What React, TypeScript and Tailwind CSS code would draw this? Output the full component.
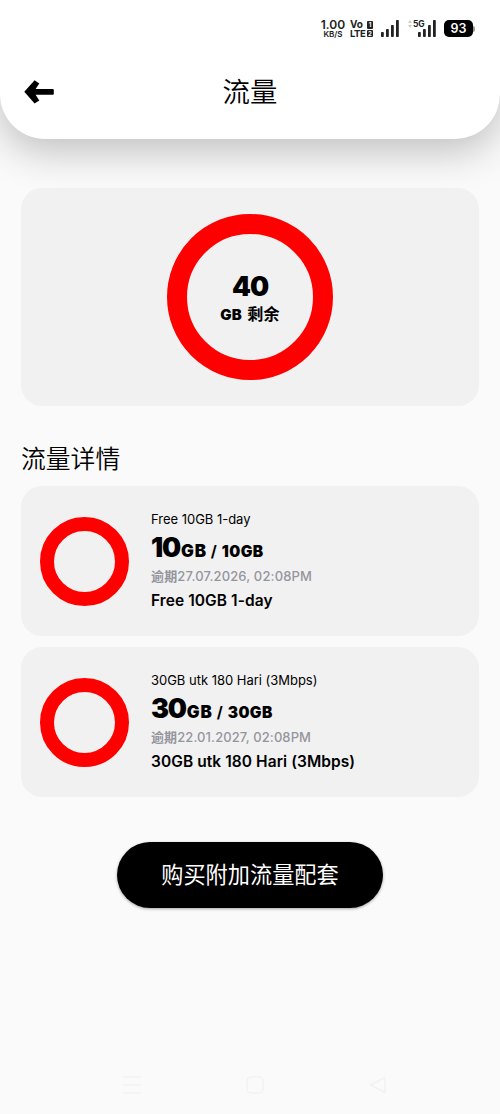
import { clsx } from "clsx";

interface Plan {
  name: string;
  amount: string;
  total: string;
  expiry: string;
  expiryClassName: string;
}

const PLANS: Plan[] = [
  {
    name: "Free 10GB 1-day",
    amount: "10",
    total: "10GB",
    expiry: "27.07.2026, 02:08PM",
    expiryClassName: "tracking-[0.15px]",
  },
  {
    name: "30GB utk 180 Hari (3Mbps)",
    amount: "30",
    total: "30GB",
    expiry: "22.01.2027, 02:08PM",
    expiryClassName: "tracking-[0.1px]",
  },
];

const SignalBars = () => (
  <svg width="18" height="17" viewBox="0 0 18 17" fill="#222" aria-hidden="true">
    <rect x="0" y="12" width="2.8" height="5" rx="0.8" />
    <rect x="5" y="9" width="2.8" height="8" rx="0.8" />
    <rect x="10" y="5" width="2.8" height="12" rx="0.8" />
    <rect x="15" y="0" width="2.8" height="17" rx="0.8" />
  </svg>
);

const StatusBar = () => (
  <div className="flex h-[58px] items-start pl-[320px] pt-5 font-semibold text-[#222]">
    <div className="flex w-[26px] flex-col items-center whitespace-nowrap">
      <span className="text-[12px] leading-[10px]">1.00</span>
      <span className="mt-[1px] text-[8px] leading-[6px]">KB/S</span>
    </div>
    <div className="ml-1 w-[23px] whitespace-nowrap font-bold">
      <div className="flex h-[9px] items-center justify-between">
        <span className="text-[10px] leading-[9px]">Vo</span>
        <span className="flex h-[8px] w-[6px] items-center justify-center rounded-[1px] bg-[#222] text-[6px] text-white">
          1
        </span>
      </div>
      <div className="flex h-[9px] items-center justify-between">
        <span className="text-[9.5px] leading-[9px] tracking-[-0.4px]">LTE</span>
        <span className="flex h-[7px] w-[6px] items-center justify-center rounded-[1px] bg-[#222] text-[6px] text-white">
          2
        </span>
      </div>
    </div>
    <div className="ml-[7.5px]">
      <SignalBars />
    </div>
    <div className="relative ml-[19.5px]">
      <SignalBars />
      <span className="absolute -left-[5px] -top-px bg-white text-[8.5px] font-bold leading-[10px] tracking-[-0.2px]">
        5G
      </span>
      <svg
        className="absolute -left-[10px] top-0"
        width="4"
        height="8"
        viewBox="0 0 4 8"
        fill="#ccc"
        aria-hidden="true"
      >
        <path d="M2 0l2 3H0zM2 8l2-3H0z" />
      </svg>
    </div>
    <div className="ml-2 flex items-center">
      <span className="flex h-[17px] w-[29px] items-center justify-center rounded-[5px] bg-black pt-px text-[12.5px] font-semibold leading-none text-white">
        93
      </span>
      <span className="h-[6px] w-[1.5px] rounded-r bg-[#999]" />
    </div>
  </div>
);

const Header = () => (
  <header className="relative h-[139px] rounded-b-[45px] bg-white shadow-[0_12px_40px_rgba(0,0,0,0.24)]">
    <StatusBar />
    <div className="grid h-[68px] grid-cols-[1fr_auto_1fr] items-center">
      <button type="button" aria-label="返回" className="ml-6 w-[30px]">
        <svg width="30" height="24" viewBox="0 0 30 24" className="block">
          <path
            d="M0.3 11.8L10.6 0.3L15.3 3.4L11.6 9H28.8Q29.8 9 29.8 10V13.7Q29.8 14.7 28.8 14.7H11.6L15.3 20.4L10.6 23.4Z"
            fill="#000"
          />
        </svg>
      </button>
      <h1 className="pt-px text-[27.4px] font-[350] leading-none">流量</h1>
    </div>
  </header>
);

const PlanCard = ({ plan }: { plan: Plan }) => (
  <li className="flex h-[150px] items-center rounded-[21px] bg-[#f1f1f1] pl-[19px]">
    <div className="size-[89px] shrink-0 rounded-full border-[14px] border-[#ff0000]" />
    <div className="ml-[22px] whitespace-nowrap">
      <p className="h-5 text-[13px] leading-5 tracking-[-0.02px]">{plan.name}</p>
      <p className="flex h-9 items-baseline font-black leading-[38px]">
        <span className="text-[27px] tracking-[-1.2px]">{plan.amount}</span>
        <span className="ml-px text-[17px] tracking-[0.8px]">GB</span>
        <span className="ml-1 text-[15.5px] font-bold">/</span>
        <span className="ml-[5px] text-[15.5px] tracking-[0.4px]">{plan.total}</span>
      </p>
      <p
        className={clsx(
          "h-[22px] text-[13px] font-medium leading-[22px] text-[#95959d]",
          plan.expiryClassName
        )}
      >
        <span className="font-bold">逾期</span>
        {plan.expiry}
      </p>
      <p className="h-[26px] text-[15.5px] font-semibold leading-[27px] tracking-[0.07px]">
        {plan.name}
      </p>
    </div>
  </li>
);

const NavigationBar = () => (
  <nav className="mt-auto flex h-[58px] items-center justify-between pl-[123px] pr-[113px]">
    <svg width="18" height="18" viewBox="0 0 18 18" stroke="#f2f2f2" strokeWidth="1.5">
      <path d="M0 1H18M0 9H18M0 17H18" />
    </svg>
    <svg width="18" height="18" viewBox="0 0 18 18" fill="none" stroke="#f2f2f2" strokeWidth="1.5">
      <rect x="1" y="1" width="16" height="16" rx="4" />
    </svg>
    <svg width="18" height="18" viewBox="0 0 18 18" fill="none" stroke="#f2f2f2" strokeWidth="1.5">
      <path d="M16 1.5V16.5L1.5 9Z" strokeLinejoin="round" />
    </svg>
  </nav>
);

const App = () => {
  return (
    <div className="flex h-[1114px] w-[500px] flex-col overflow-hidden bg-[#fafafa] font-['Inter','Noto_Sans_CJK_SC',sans-serif] text-black">
      <Header />
      <main className="relative px-[21px] pt-[49px]">
        <section className="flex h-[218px] items-center justify-center rounded-[21px] bg-[#f1f1f1]">
          <div className="flex size-[166px] flex-col items-center justify-center rounded-full border-[20px] border-[#ff0000]">
            <span className="mt-[7px] text-[27px] font-black leading-7 tracking-[-1px]">40</span>
            <span className="flex items-baseline gap-[5px] text-[16px] font-bold leading-[26px]">
              <span className="text-[15px] font-black tracking-[0.4px]">GB</span>
              <span className="tracking-[0.3px]">剩余</span>
            </span>
          </div>
        </section>

        <h2 className="mt-[36px] h-[34px] text-[24.8px] font-[350] leading-[34px]">流量详情</h2>
        <ul className="mt-[10px] flex flex-col gap-[11px]">
          {PLANS.map((plan) => (
            <PlanCard key={plan.name} plan={plan} />
          ))}
        </ul>

        <button
          type="button"
          className="mx-auto mt-[45px] flex h-[66px] w-[266px] items-center justify-center rounded-full bg-black text-[22.2px] text-white shadow-[0_1px_3px_rgba(0,0,0,0.35)]"
        >
          购买附加流量配套
        </button>
      </main>
      <NavigationBar />
    </div>
  );
};

export default App;
